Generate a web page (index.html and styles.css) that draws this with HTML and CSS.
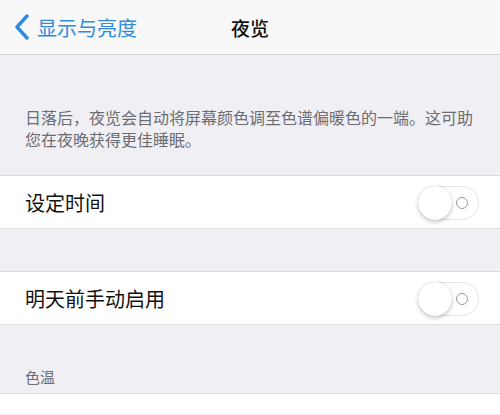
FILE: index.html
```html
<!DOCTYPE html>
<html>

<head>
    <title>夜览</title>
    <link rel="stylesheet" href="styles.css">
</head>

<body>
    <div class="navbar">
        <div class="back">
            <svg class="chevron" width="16" height="26" viewBox="0 0 16 26">
                <path d="M13 2 L3 13 L13 24" fill="none" stroke="#2f8ae0" stroke-width="3.4" stroke-linecap="round" stroke-linejoin="round"/>
            </svg>
            <span>显示与亮度</span>
        </div>
        <div class="title">夜览</div>
    </div>

    <p class="note">日落后，夜览会自动将屏幕颜色调至色谱偏暖色的一端。这可助您在夜晚获得更佳睡眠。</p>

    <div class="cell first">
        <span class="label">设定时间</span>
        <div class="switch"><div class="knob"></div><div class="ring"></div></div>
    </div>

    <div class="cell second">
        <span class="label">明天前手动启用</span>
        <div class="switch"><div class="knob"></div><div class="ring"></div></div>
    </div>

    <div class="section-title">色温</div>
    <div class="bottom"></div>
</body>

</html>
```

FILE: styles.css
```css
body {
    margin: 0;
    background-color: #efeff4;
    font-family: "Noto Sans CJK SC", "Noto Sans", sans-serif;
    overflow: hidden;
}

.navbar {
    height: 54px;
    background-color: #f8f8f8;
    border-bottom: 1px solid #d6d6da;
    display: flex;
    align-items: center;
    justify-content: center;
    position: relative;
}

.back {
    position: absolute;
    left: 14px;
    top: 0;
    height: 54px;
    display: flex;
    align-items: center;
    color: #2f8ae0;
    font-size: 20px;
}

.chevron {
    margin-right: 7px;
}

.title {
    font-size: 19px;
    font-weight: 500;
    color: #111;
}

.note {
    margin: 51px 0 0 0;
    padding: 0 24px 0 25px;
    font-size: 16px;
    line-height: 22px;
    color: #6d6d72;
}

.cell {
    height: 52px;
    background-color: #fff;
    border-top: 1px solid #dcdce0;
    border-bottom: 1px solid #dcdce0;
    display: flex;
    align-items: center;
    justify-content: space-between;
    padding: 0 21px 0 25px;
}

.first {
    margin-top: 25px;
}

.second {
    margin-top: 42px;
}

.label {
    font-size: 20px;
    color: #111;
}

.switch {
    width: 59px;
    height: 32px;
    border: 1.5px solid #e4e4e6;
    border-radius: 18px;
    position: relative;
    margin-top: 2px;
}

.knob {
    position: absolute;
    left: -1px;
    top: -1px;
    width: 34px;
    height: 34px;
    border-radius: 50%;
    background-color: #fff;
    box-shadow: 0 2px 4px rgba(0, 0, 0, 0.22), 0 0 1px rgba(0, 0, 0, 0.2);
}

.ring {
    position: absolute;
    right: 10px;
    top: 10px;
    width: 10px;
    height: 10px;
    border: 1.2px solid #9a9a9e;
    border-radius: 50%;
}

.section-title {
    margin-top: 39px;
    padding-left: 25px;
    font-size: 15px;
    color: #6d6d72;
    height: 25px;
    line-height: 25px;
}

.bottom {
    margin-top: 4px;
    height: 20px;
    background-color: #fff;
    border-top: 1px solid #dcdce0;
}
```
